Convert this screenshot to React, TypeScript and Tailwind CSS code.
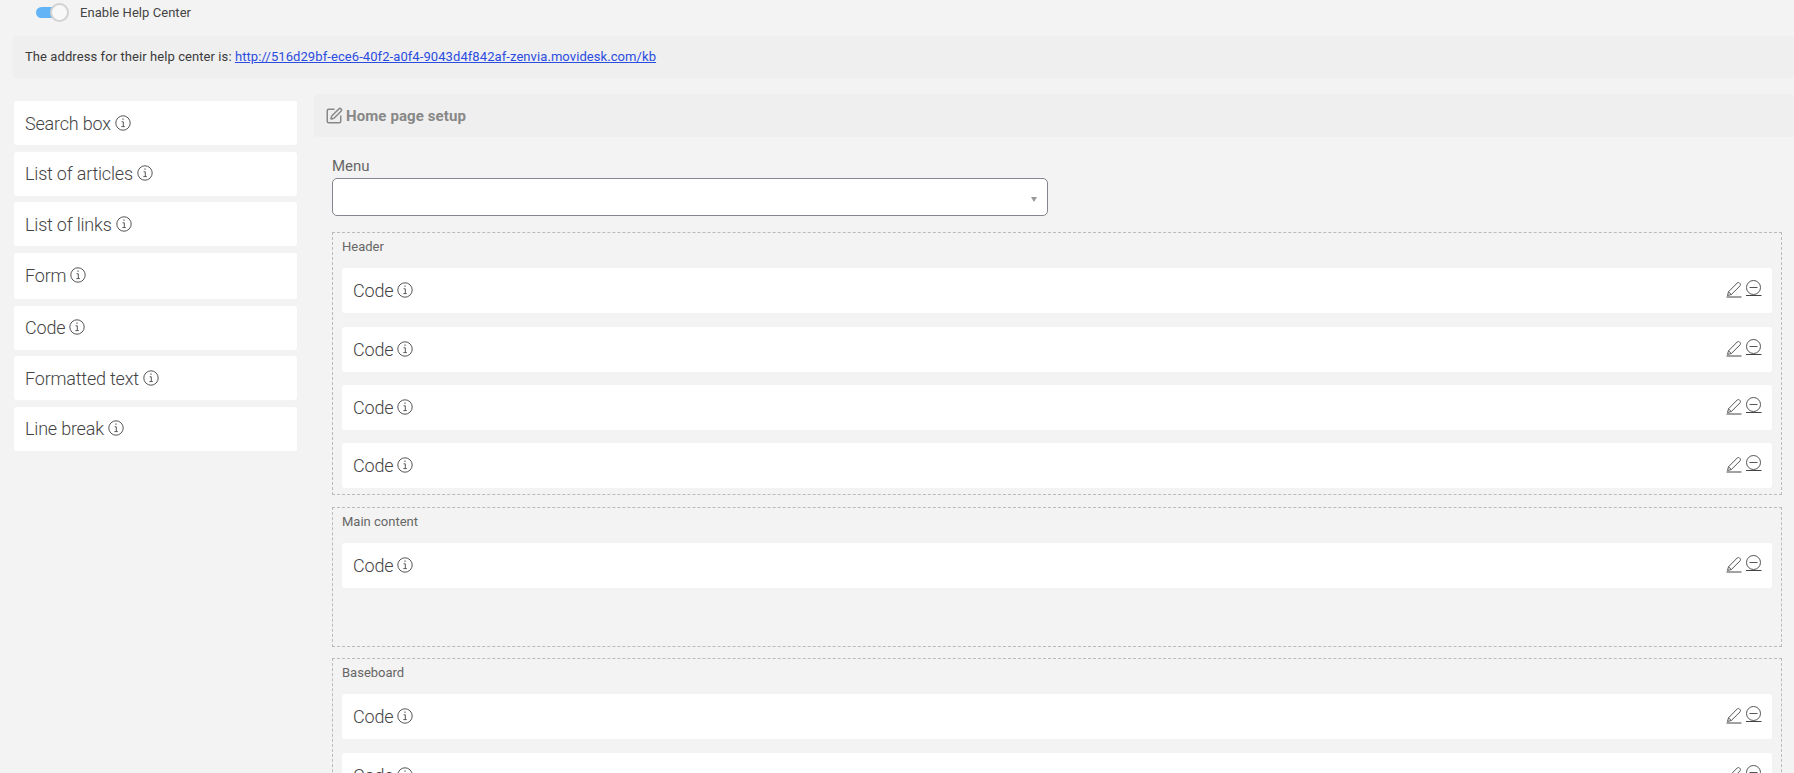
import { SquarePen } from 'lucide-react'

const widgets = [
  { name: 'Search box', tall: false },
  { name: 'List of articles', tall: false },
  { name: 'List of links', tall: false },
  { name: 'Form', tall: true },
  { name: 'Code', tall: false },
  { name: 'Formatted text', tall: false },
  { name: 'Line break', tall: false },
]

function InfoIcon() {
  return (
    <svg width="16" height="16" viewBox="0 0 16 16" fill="none" stroke="#555" className="mb-[1px] ml-[4px] shrink-0">
      <circle cx="8" cy="8" r="7.200" strokeWidth="1" />
      <path d="M6.600 6.800h1.700v4.700M6.400 11.600h3.400" strokeWidth="1" />
      <path d="M7.400 4.200h1.200" strokeWidth="1.300" />
    </svg>
  )
}

function EditIcon() {
  return (
    <svg width="16" height="17" viewBox="0 0 16 17" fill="none" stroke="#555" strokeWidth="1" className="mt-[13px] shrink-0">
      <path d="M1.500 14.500l1-3.700L11.200 2c.7-.7 1.700-.7 2.300 0l.5.500c.7.700.7 1.700 0 2.400L5.300 13.500z" />
      <path d="M2.500 10.800l2.800 2.700" />
      <path d="M0.500 16h15" stroke="#444" />
    </svg>
  )
}

function RemoveIcon() {
  return (
    <svg width="17" height="17" viewBox="0 0 17 17" fill="none" stroke="#555" strokeWidth="1" className="mt-[12px] shrink-0">
      <circle cx="8.500" cy="7.500" r="7" />
      <path d="M4.500 7.500h8" />
      <path d="M1 15.500h15.500" stroke="#444" />
    </svg>
  )
}

function PlacedWidget() {
  return (
    <div className="flex h-[45px] justify-between rounded-[3px] bg-white pl-[11px] pr-[10px]">
      <div className="flex items-center text-[18px] font-light tracking-[-0.2px] text-[#444]">
        Code
        <InfoIcon />
      </div>
      <div className="flex items-start gap-[3px]">
        <EditIcon />
        <RemoveIcon />
      </div>
    </div>
  )
}

function Zone({ title, count, className }: { title: string; count: number; className: string }) {
  return (
    <section className={`border border-dashed border-[#bbb] px-[9px] ${className}`}>
      <div className="mb-[8.4px] flex h-[27px] items-center text-[13px] text-[#666]">{title}</div>
      <div className="flex flex-col gap-[13.3px]">
        {Array.from({ length: count }).map((_, i) => (
          <PlacedWidget key={i} />
        ))}
      </div>
    </section>
  )
}

export default function App() {
  return (
    <div className="h-[773px] overflow-hidden bg-[#f3f3f3] font-['Roboto',sans-serif]">
      <div className="flex h-[25px] items-center gap-[12px] pl-[36px] text-[13px] tracking-[0.05px] text-[#444]">
        <span className="relative block h-[11px] w-[32px] rounded-full bg-[#63b4f6]">
          <span className="absolute right-[-1px] top-[-4px] h-[19px] w-[19px] rounded-full border-2 border-[#d2d2d2] bg-[#f8f8f8]" />
        </span>
        Enable Help Center
      </div>

      <div className="ml-[13px] mt-[11px] flex h-[42px] items-center rounded-[3px] bg-[#efefef] pl-[12px] text-[13px] tracking-[0.08px] text-[#3a3a3a]">
        The address for their help center is:&nbsp;
        <a href="#" className="text-[#2b4ce0] underline">
          http://516d29bf-ece6-40f2-a0f4-9043d4f842af-zenvia.movidesk.com/kb
        </a>
      </div>

      <div className="mt-[16px] flex">
        <aside className="ml-[14px] flex w-[283px] shrink-0 flex-col gap-[6.67px] pt-[7px]">
          {widgets.map((w) => (
            <div
              key={w.name}
              className={`flex items-center rounded-[3px] bg-white pl-[11px] text-[18px] font-light tracking-[-0.2px] text-[#444] ${w.tall ? 'h-[46px]' : 'h-[44px]'}`}
            >
              {w.name}
              <InfoIcon />
            </div>
          ))}
        </aside>

        <main className="ml-[17px] min-w-0 flex-1">
          <div className="flex h-[43px] items-center gap-[3px] rounded-[3px] bg-[#efefef] pl-[11px] pt-[1px] text-[15px] font-bold tracking-[0.1px] text-[#888]">
            <SquarePen size={18} strokeWidth={2} />
            Home page setup
          </div>
          <div className="pl-[18px] pr-[12px]">
            <div className="mt-[20px] text-[15px] leading-[18px] text-[#666]">Menu</div>
            <div className="relative mt-[3px] h-[38px] w-[716px] rounded-[5px] border border-[#85858f] bg-white">
              <span className="absolute right-[10px] top-[18px] h-0 w-0 border-x-[3.5px] border-t-[5px] border-x-transparent border-t-[#999]" />
            </div>
            <Zone title="Header" count={4} className="mt-[16px] h-[263px]" />
            <Zone title="Main content" count={1} className="mt-[12px] h-[140px]" />
            <Zone title="Baseboard" count={2} className="mt-[11px] h-[200px]" />
          </div>
        </main>
      </div>
    </div>
  )
}
